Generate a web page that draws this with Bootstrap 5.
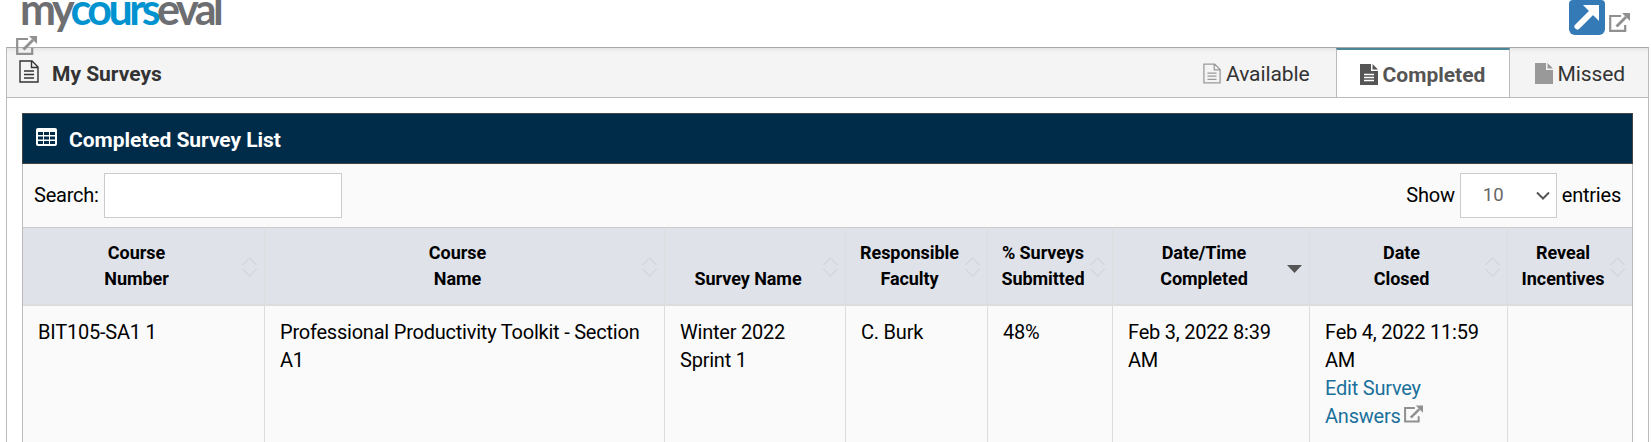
<!DOCTYPE html>
<html lang="en">
<head>
<meta charset="utf-8">
<title>My Surveys</title>
<link href="https://cdn.jsdelivr.net/npm/bootstrap@5.3.0/dist/css/bootstrap.min.css" rel="stylesheet">
<style>
body{font-family:Roboto,sans-serif;font-size:20px;line-height:28px;letter-spacing:-.22px;color:#000;background:#fff;height:442px;overflow:hidden}
.top-strip{height:47px;padding:0 21px 0 20px}
.brand{font:700 43px/44px Lato,sans-serif;color:#6d6e71;letter-spacing:-3.5px;margin-top:-13px;height:44px;white-space:nowrap}
.brand b{color:#0093d0;font-weight:700}
.brand-ext{left:16px;top:36px;z-index:3}
.launch{width:36px;height:35px;background:#337ab7;border-radius:4px 4px 6px 6px}
.panel{margin:0 2px 0 6px;border:1px solid #bbb;border-bottom:0;border-top-color:#aaa;height:395px}
.panel-head{height:50px;background:#f4f4f4;border-bottom:1px solid #bbb;box-shadow:inset 0 4px 4px -3px #ddd}
.panel-title{font-weight:700;color:#333;padding:2px 0 0 12px;gap:13px;font-size:21px;letter-spacing:0}
.tab{height:49px;color:#333;gap:5px;font-size:21px;letter-spacing:-.1px;padding-top:2px}
.tab.on{width:174px;height:49px;border:1px solid #bbb;border-top:2px solid #4d8696;border-bottom:0;background:#fff;color:#555;font-weight:700;letter-spacing:0}
.inner{margin:15px 15px 0;}
.inner-head{height:51px;background:#002b49;border:1px solid #444;color:#fff;font-weight:700;padding:2px 0 0 13px;gap:12px;font-size:21px;letter-spacing:-.05px}
.inner-body{border:1px solid #bbb;border-width:0 1px;background:#fafafa;height:279px}
.tools{height:63px;padding:0 11px 0 11px}
.tools span{position:relative;top:-1px}
.search-box{width:238px;height:45px;border:1px solid #ccc;background:#fff;margin-left:5px}
.len-box{width:97px;height:45px;border:1px solid #ccc;background:#fff;color:#666;margin:0 5px;padding:0 6px 0 22px;font-size:18.5px;letter-spacing:0}
.grid{table-layout:fixed;width:1609px;margin:0;border-collapse:separate;border-spacing:0;color:#000}
.grid th{height:79px;background:#dfe2e9;border-top:1px solid #c8c9cc;border-bottom:2px solid #ddd;border-right:1px solid #ddd;padding:10px 23px 12px 9px;vertical-align:bottom;text-align:center;font-size:18px;line-height:26px;letter-spacing:-.05px;font-weight:700;position:relative;white-space:nowrap}
.grid td{height:150px;background:#fafafa;border-right:1px solid #ddd;padding:12px 15px;vertical-align:top;white-space:nowrap}
.grid th:last-child,.grid td:last-child{border-right:0}
.sorter{position:absolute;right:7px;top:29px}
.lnk{color:#1a719c;text-decoration:none}
</style>
</head>
<body>
<svg class="d-none">
<symbol id="ext" viewBox="0 0 21 19"><path d="M12 3H1.200v14.800h15V12" fill="none" stroke="#909090" stroke-width="2.200"/><path d="M7.500 13.500 17 4" stroke="#909090" stroke-width="2.800"/><path d="M13 0h8v8z" fill="#909090"/></symbol>
<symbol id="doc" viewBox="0 0 20 23"><path d="M1 1h12l6 6v15H1zM12.500 1v6.500H19M5 11h10M5 14.500h10M5 18h10" fill="none" stroke="currentColor" stroke-width="1.400"/></symbol>
</svg>
<header class="top-strip d-flex justify-content-between position-relative">
  <div class="brand">my<b>cours</b>eval</div>
  <svg class="brand-ext position-absolute" width="21" height="19"><use href="#ext"/></svg>
  <div class="d-flex gap-1">
    <div class="launch"><svg class="d-block" width="36" height="35"><path d="M8.500 26.500 23 12" stroke="#fff" stroke-width="6" stroke-linecap="round"/><path d="M14 5h16v16z" fill="#fff"/></svg></div>
    <svg width="21" height="19" style="margin-top:13px"><use href="#ext"/></svg>
  </div>
</header>
<main class="panel">
  <div class="panel-head d-flex justify-content-between">
    <div class="panel-title d-flex align-items-center"><svg width="20" height="23" style="margin-top:-5px"><use href="#doc"/></svg><span>My Surveys</span></div>
    <div class="d-flex">
      <div class="tab d-flex align-items-center" style="margin-right:26px"><svg width="18" height="21" style="color:#999"><use href="#doc"/></svg><span>Available</span></div>
      <div class="tab on d-flex align-items-center justify-content-center"><svg width="18" height="21" viewBox="0 0 18 21"><path d="M0 0h11v7h7v14H0zM12.500 0 18 5.500h-5.500z" fill="#555"/><path d="M4 10.500h10M4 13.500h10M4 16.500h10" stroke="#fff" stroke-width="1.400"/></svg><span>Completed</span></div>
      <div class="tab d-flex align-items-center" style="padding-left:25px;padding-right:23px"><svg width="18" height="21" viewBox="0 0 18 21"><path d="M0 0h11v7h7v14H0zM12.500 0 18 5.500h-5.500z" fill="#999"/></svg><span>Missed</span></div>
    </div>
  </div>
  <section class="inner">
    <div class="inner-head d-flex align-items-center"><svg width="21" height="18" viewBox="0 0 21 18" style="margin-top:-5px"><rect width="21" height="18" rx="2" fill="#fff"/><path d="M2 4h5v3H2zM8 4h5v3H8zM14 4h5v3h-5zM2 8.500h5v3H2zM8 8.500h5v3H8zM14 8.500h5v3h-5zM2 13h5v3H2zM8 13h5v3H8zM14 13h5v3h-5z" fill="#002b49"/></svg><span>Completed Survey List</span></div>
    <div class="inner-body">
      <div class="tools d-flex justify-content-between align-items-center">
        <div class="d-flex align-items-center"><span>Search:</span><div class="search-box"></div></div>
        <div class="d-flex align-items-center"><span>Show</span><div class="len-box d-flex align-items-center justify-content-between"><span>10</span><svg width="14" height="9"><path d="m1 1.500 6 6 6-6" fill="none" stroke="#555" stroke-width="2"/></svg></div><span>entries</span></div>
      </div>
      <table class="grid">
        <colgroup><col style="width:242px"><col style="width:400px"><col style="width:181px"><col style="width:142px"><col style="width:125px"><col style="width:197px"><col style="width:198px"><col style="width:124px"></colgroup>
        <thead><tr>
          <th>Course<br>Number</th><th>Course<br>Name</th><th>Survey Name</th><th>Responsible<br>Faculty</th><th>% Surveys<br>Submitted</th><th>Date/Time<br>Completed</th><th>Date<br>Closed</th><th>Reveal<br>Incentives</th>
        </tr></thead>
        <tbody><tr>
          <td>BIT105-SA1 1</td><td>Professional Productivity Toolkit - Section<br>A1</td><td>Winter 2022<br>Sprint 1</td><td>C. Burk</td><td>48%</td><td>Feb 3, 2022 8:39<br>AM</td><td>Feb 4, 2022 11:59<br>AM<br><a class="lnk" href="#">Edit Survey<br>Answers</a> <svg width="19" height="18" style="margin-left:-1px;vertical-align:0"><use href="#ext"/></svg></td><td></td>
        </tr></tbody>
      </table>
    </div>
  </section>
</main>
<script src="https://cdn.jsdelivr.net/npm/bootstrap@5.3.0/dist/js/bootstrap.bundle.min.js"></script>
<script>
document.querySelectorAll('.grid th').forEach(function(th,i){
  th.insertAdjacentHTML('beforeend', i===5
    ? '<svg class="sorter" width="15" height="20"><path d="M0 8h15l-7.500 8z" fill="#555"/></svg>'
    : '<svg class="sorter" width="15" height="20"><path d="M.500 8 7.500 .800 14.500 8M.500 12l7 7.200 7-7.200" fill="none" stroke="#ccc" stroke-width="1"/></svg>');
});
</script>
</body>
</html>
